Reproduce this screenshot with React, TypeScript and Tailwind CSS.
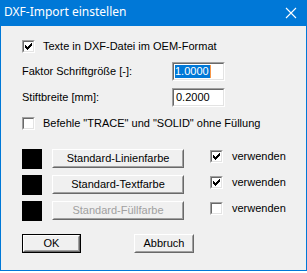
import React from "react";

const CHECK = [
  "......X",
  ".....XX",
  "X...XXX",
  "XX.XXX.",
  "XXXXX..",
  ".XXX...",
  "..X....",
];

function CheckGlyph() {
  const rects: React.ReactElement[] = [];
  CHECK.forEach((row, y) =>
    row.split("").forEach((c, x) => {
      if (c === "X") rects.push(<rect key={`${x}-${y}`} x={x} y={y} width={1} height={1} fill="#000" />);
    })
  );
  return (
    <svg width="7" height="7" viewBox="0 0 7 7" shapeRendering="crispEdges" className="block">
      {rects}
    </svg>
  );
}

function CheckBox({ checked }: { checked: boolean }) {
  return (
    <div className="w-[13px] h-[13px] shrink-0 border border-t-[#a0a0a0] border-l-[#a0a0a0] border-r-white border-b-white">
      <div className="w-full h-full border border-t-[#696969] border-l-[#696969] border-r-[#e3e3e3] border-b-[#e3e3e3] bg-white flex items-center justify-center">
        {checked && <CheckGlyph />}
      </div>
    </div>
  );
}

function Btn({ children, w, disabled, def }: { children: React.ReactNode; w: string; disabled?: boolean; def?: boolean }) {
  const inner = (
    <div className="w-full h-full border border-t-white border-l-white border-r-[#696969] border-b-[#696969]">
      <div
        className={`w-full h-full border border-t-[#f0f0f0] border-l-[#f0f0f0] border-r-[#a0a0a0] border-b-[#a0a0a0] bg-[#f0f0f0] flex items-center justify-center ${
          disabled ? "text-[#a0a0a0]" : "text-black"
        }`}
      >
        {children}
      </div>
    </div>
  );
  return (
    <div className={`${w} h-[19px] shrink-0 ${def ? "border border-black" : ""}`}>{inner}</div>
  );
}

function Input({ value, selected }: { value: string; selected?: boolean }) {
  return (
    <div className="w-[53px] h-[19px] border border-t-[#a0a0a0] border-l-[#a0a0a0] border-r-white border-b-white">
      <div className="w-full h-full border border-t-[#696969] border-l-[#696969] border-r-[#e3e3e3] border-b-[#e3e3e3] bg-white flex items-center pl-[1px]">
        {selected ? (
          <span className="flex items-center">
            <span className="bg-[#0078d7] text-white leading-[13px] pr-[1px]">{value}</span>
            <span className="w-[1px] h-[13px] bg-[#f79646]" />
          </span>
        ) : (
          <span className="leading-[13px] pl-[1px]">{value}</span>
        )}
      </div>
    </div>
  );
}

function ColorRow({ label, checked, disabled, mt }: { label: string; checked: boolean; disabled?: boolean; mt: string }) {
  return (
    <div className={`flex items-start ${mt} h-[20px]`}>
      <div className="w-[20px] h-[20px] bg-black shrink-0" />
      <div className="ml-[10px]">
        <Btn w="w-[132px]" disabled={disabled}>{label}</Btn>
      </div>
      <div className="ml-[26px] mt-[1px] flex items-center">
        <CheckBox checked={checked} />
        <span className="ml-[9px]">verwenden</span>
      </div>
    </div>
  );
}

export default function App() {
  return (
    <div className="w-[307px] h-[273px] bg-white relative overflow-hidden" style={{}}>
      <div className="w-[307px] h-[271px] flex flex-col bg-[#0078d7]">
        <div className="h-[26px] shrink-0 flex items-center justify-between pl-[4px] pr-[10px] text-white text-[12px]" style={{ fontFamily: '"Noto Sans", "Open Sans", sans-serif' }}>
          <span className="-mt-[2px]">DXF-Import einstellen</span>
          <svg width="12" height="12" viewBox="0 0 12 12" className="block">
            <path d="M1 1 L11 11 M11 1 L1 11" stroke="#fff" strokeWidth="1.1" />
          </svg>
        </div>
        <div
          className="flex-1 mx-[1px] mb-[1px] bg-[#f0f0f0] flex flex-col pl-[21px] text-[11px] text-black leading-[13px]"
          style={{ fontFamily: '"Liberation Sans", Arial, sans-serif' }}
        >
          <div className="mt-[14px] flex items-center h-[13px]">
            <CheckBox checked />
            <span className="ml-[8px]">Texte in DXF-Datei im OEM-Format</span>
          </div>
          <div className="mt-[9px] flex items-center h-[19px]">
            <span className="w-[150px]">Faktor Schriftgröße [-]:</span>
            <Input value="1.0000" selected />
          </div>
          <div className="mt-[7px] flex items-center h-[19px]">
            <span className="w-[150px]">Stiftbreite [mm]:</span>
            <Input value="0.2000" />
          </div>
          <div className="mt-[10px] flex items-center h-[13px]">
            <CheckBox checked={false} />
            <span className="ml-[8px]">Befehle "TRACE" und "SOLID" ohne Füllung</span>
          </div>
          <ColorRow label="Standard-Linienfarbe" checked mt="mt-[19px]" />
          <ColorRow label="Standard-Textfarbe" checked mt="mt-[6px]" />
          <ColorRow label="Standard-Füllfarbe" checked={false} disabled mt="mt-[6px]" />
          <div className="mt-[13px] flex items-start">
            <Btn w="w-[59px]" def>OK</Btn>
            <div className="ml-[53px]">
              <Btn w="w-[60px]">Abbruch</Btn>
            </div>
          </div>
        </div>
      </div>
    </div>
  );
}
